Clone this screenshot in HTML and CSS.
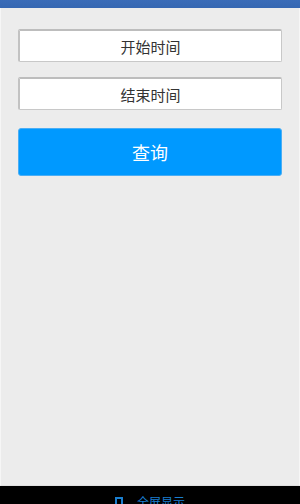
FILE: index.html
```html
<!DOCTYPE html>
<html lang="zh">
<head>
<meta charset="utf-8">
<link rel="stylesheet" href="styles.css">
</head>
<body>
<div class="topbar"></div>
<main class="content">
  <div class="field">开始时间</div>
  <div class="field second">结束时间</div>
  <button class="query">查询</button>
</main>
<footer class="footer">
  <span class="fs-icon"></span><span class="fs-text">全屏显示</span>
</footer>
</body>
</html>
```
FILE: styles.css
```css
html, body {
  margin: 0;
  padding: 0;
  width: 300px;
  height: 504px;
  overflow: hidden;
  background: #000;
  font-family: "Noto Sans CJK SC", "Noto Sans", sans-serif;
}
.topbar {
  height: 8px;
  background: linear-gradient(#3a6cb8, #3567b2);
}
.content {
  height: 478px;
  box-sizing: border-box;
  background: #ececec;
  border-left: 1px solid #f6f6f6;
  border-right: 1px solid #f6f6f6;
  border-bottom: 1px solid #e0e0e0;
  padding: 21px 17px 0 17px;
  display: flex;
  flex-direction: column;
}
.field {
  height: 33px;
  box-sizing: border-box;
  background: #fff;
  border: 1px solid #c8c8c8;
  border-top: 2px solid #bdbdbd;
  border-left: 2px solid #c2c2c2;
  border-radius: 2px;
  font-size: 15px;
  color: #333;
  display: flex;
  align-items: center;
  justify-content: center;
}
.second {
  margin-top: 15px;
}
.query {
  margin-top: 18px;
  height: 48px;
  border: 1px solid #4aaef5;
  border-radius: 3px;
  background: #0099ff;
  color: #fff;
  font-family: "Noto Sans CJK SC", "Noto Sans", sans-serif;
  font-size: 18px;
  padding: 0;
}
.footer {
  height: 18px;
  box-sizing: border-box;
  padding-top: 10px;
  background: #000;
  display: flex;
  justify-content: center;
  align-items: flex-start;
  gap: 14px;
  overflow: hidden;
  color: #1a7fd0;
  font-size: 12px;
  line-height: 12px;
}
.fs-icon {
  width: 8px;
  height: 12px;
  margin-top: 1px;
  border: 2px solid #1a7fd0;
  box-sizing: border-box;
}
.fs-text {
  margin-top: 0;
}
```
